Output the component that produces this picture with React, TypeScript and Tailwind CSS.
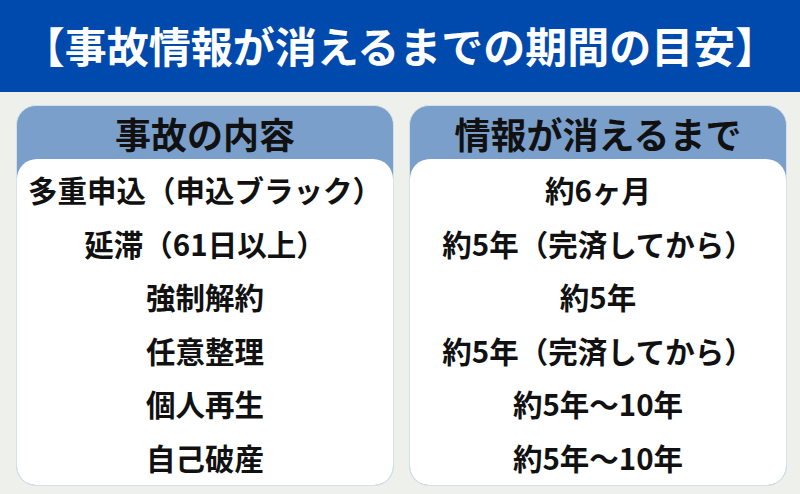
const rows = [
  ["多重申込（申込ブラック）", "約6ヶ月"],
  ["延滞（61日以上）", "約5年（完済してから）"],
  ["強制解約", "約5年"],
  ["任意整理", "約5年（完済してから）"],
  ["個人再生", "約5年〜10年"],
  ["自己破産", "約5年〜10年"],
];

const Column = ({ title, items }: { title: string; items: string[] }) => (
  <div className="flex flex-col rounded-[20px] bg-[#7a9fcb] border border-[#d6e0ea] overflow-hidden">
    <div className="h-[53px] flex items-center justify-center text-[36px] font-bold text-[#111] leading-none">
      {title}
    </div>
    <div className="flex-1 bg-white rounded-t-[20px] pt-[4px] flex flex-col">
      {items.map((t, i) => (
        <div key={i} className="h-[53.6px] flex items-center justify-center text-[29.5px] font-bold text-[#111] leading-none">
          {t}
        </div>
      ))}
    </div>
  </div>
);

export default function App() {
  return (
    <div
      className="w-[800px] h-[494px] bg-[#eef0eb] flex flex-col overflow-hidden"
      style={{ fontFamily: '"Noto Sans CJK JP", "Noto Sans", sans-serif' }}
    >
      <div className="h-[92px] bg-[#004aad] flex items-center justify-center text-white text-[42px] font-bold leading-none pb-[2px]">
        【事故情報が消えるまでの期間の目安】
      </div>
      <div className="flex-1 grid grid-cols-2 gap-[15px] pl-[16px] pr-[13px] pt-[13px] pb-[8px]">
        <Column title="事故の内容" items={rows.map((r) => r[0])} />
        <Column title="情報が消えるまで" items={rows.map((r) => r[1])} />
      </div>
    </div>
  );
}
